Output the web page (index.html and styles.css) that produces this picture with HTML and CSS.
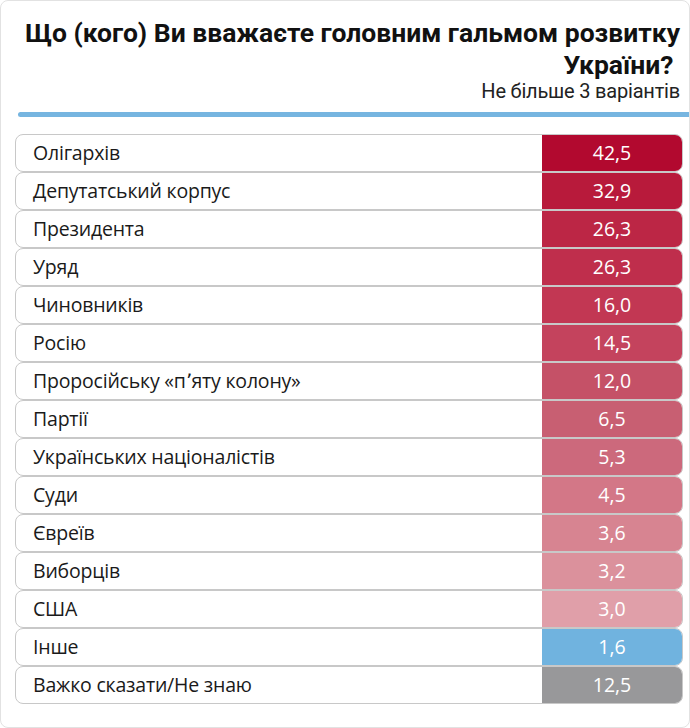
FILE: index.html
```html
<!DOCTYPE html>
<html lang="uk">
<head>
<meta charset="utf-8">
<link rel="stylesheet" href="styles.css">
</head>
<body>
<div class="card">
  <div class="head">
    <h1 class="title">Що (кого) Ви вважаєте головним гальмом розвитку<br>України?&nbsp;</h1>
    <div class="sub">Не більше 3 варіантів</div>
  </div>
  <div class="rule"></div>
  <div class="rows">
    <div class="row"><span class="label">Олігархів</span><span class="val" style="background:#b2092f">42,5</span></div>
    <div class="row"><span class="label">Депутатський корпус</span><span class="val" style="background:#b81a3b">32,9</span></div>
    <div class="row"><span class="label">Президента</span><span class="val" style="background:#bc2645">26,3</span></div>
    <div class="row"><span class="label">Уряд</span><span class="val" style="background:#bf2e4c">26,3</span></div>
    <div class="row"><span class="label">Чиновників</span><span class="val" style="background:#c23753">16,0</span></div>
    <div class="row"><span class="label">Росію</span><span class="val" style="background:#c4435d">14,5</span></div>
    <div class="row"><span class="label">Проросійську «п՚яту колону»</span><span class="val" style="background:#c55167">12,0</span></div>
    <div class="row"><span class="label">Партії</span><span class="val" style="background:#c85f72">6,5</span></div>
    <div class="row"><span class="label">Українських націоналістів</span><span class="val" style="background:#cc697c">5,3</span></div>
    <div class="row"><span class="label">Суди</span><span class="val" style="background:#d37787">4,5</span></div>
    <div class="row"><span class="label">Євреїв</span><span class="val" style="background:#d78491">3,6</span></div>
    <div class="row"><span class="label">Виборців</span><span class="val" style="background:#db919c">3,2</span></div>
    <div class="row"><span class="label">США</span><span class="val" style="background:#e09fa9">3,0</span></div>
    <div class="row"><span class="label">Інше</span><span class="val" style="background:#70b3df">1,6</span></div>
    <div class="row"><span class="label">Важко сказати/Не знаю</span><span class="val" style="background:#98989a">12,5</span></div>
  </div>
</div>
</body>
</html>
```

FILE: styles.css
```css
html, body {
  margin: 0;
  padding: 0;
  background: #ffffff;
}
body {
  font-family: "Open Sans", "Liberation Sans", sans-serif;
  color: #111;
}
.card {
  width: 688px;
  height: 726px;
  border: 1px solid #e2e2e2;
  border-radius: 8px;
  box-sizing: content-box;
  display: flex;
  flex-direction: column;
}
.head {
  padding: 16px 9px 0 0;
  text-align: right;
}
.title {
  margin: 0;
  font-family: "Roboto", "Liberation Sans", sans-serif;
  font-weight: 700;
  font-size: 26.5px;
  line-height: 32px;
  letter-spacing: 0;
  color: #111;
}
.sub {
  font-family: "Roboto", "Liberation Sans", sans-serif;
  font-size: 20px;
  line-height: 22px;
  margin-top: -1px;
  letter-spacing: -0.2px;
  color: #222;
}
.rule {
  margin: 10px 0 0 17px;
  height: 5px;
  border-radius: 3px 0 0 3px;
  background: #76b5e0;
}
.rows {
  margin: 17px 0 0 14px;
  width: 668px;
  display: flex;
  flex-direction: column;
}
.row {
  height: 38px;
  box-sizing: border-box;
  border: 1px solid #c8c8c8;
  border-radius: 8px;
  display: flex;
  align-items: stretch;
  overflow: hidden;
}
.label {
  flex: 1;
  padding-left: 17px;
  font-size: 19.5px;
  line-height: 36px;
  color: #1a1a1a;
  letter-spacing: -0.2px;
}
.val {
  width: 140px;
  text-align: center;
  color: #fff;
  font-size: 19.5px;
  line-height: 36px;
}
```
